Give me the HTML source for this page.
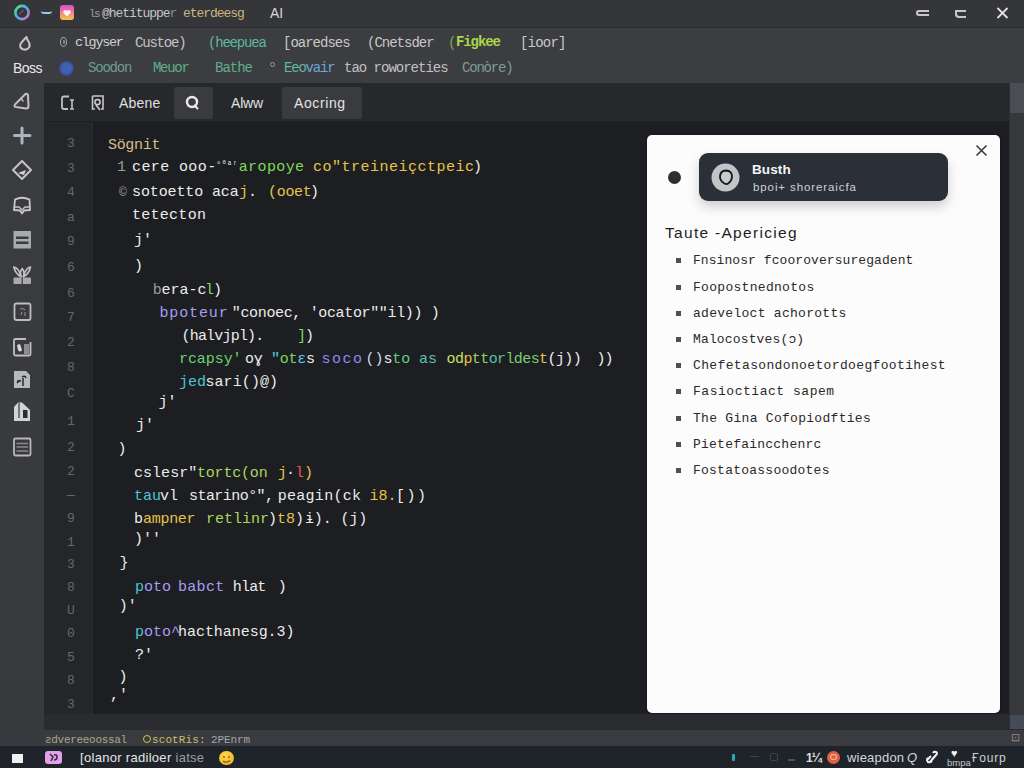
<!DOCTYPE html>
<html><head><meta charset="utf-8">
<style>
*{margin:0;padding:0;box-sizing:border-box}
html,body{width:1024px;height:768px;overflow:hidden;background:#1e1f22;font-family:"Liberation Sans",sans-serif}
.a{position:absolute}
.mono{font-family:"Liberation Mono",monospace}
#title{left:0;top:0;width:1024px;height:27px;background:#35363a}
#menu{left:0;top:26.5px;width:1024px;height:56.5px;background:#3c3d41;border-top:1.5px solid #2a2b2e}
#act{left:0;top:83px;width:44px;height:663px;background:linear-gradient(#3b3c3f,#38393c)}
#tabs{left:44px;top:83px;width:965px;height:39px;background:#27282b;border-bottom:1px solid #1f2023}
#gut{left:44px;top:122px;width:49px;height:592px;background:#252629;border-right:1px solid #2c2d30}
#ed{left:93px;top:122px;width:916px;height:592px;background:#1d1e21}
#strip{left:44px;top:714px;width:965px;height:15px;background:#2a2b2e}
#panel{left:44px;top:729px;width:980px;height:17px;background:#3a3b3f;border-top:1px solid #2a2b2e}
#sb{left:1009px;top:83px;width:15px;height:646px;background:#37383b;border-left:1px solid #2e2f32}
#thumb{left:1010px;top:83px;width:14px;height:30px;background:#4a4e54}
#status{left:0;top:746px;width:1024px;height:22px;background:#1f242b}
.ln{position:absolute;left:46.5px;width:49px;text-align:center;color:#66676a;font-family:"Liberation Mono",monospace;font-size:13px;line-height:16px}
.cl{position:absolute;font-family:"Liberation Mono",monospace;font-size:15px;letter-spacing:0px;line-height:18px;color:#e6e6e6;white-space:pre}
.w{color:#e8e8e8}.g{color:#7ed957}.y{color:#e8c85a}.p{color:#a99cf0}.c{color:#4fc3d6}.lg{color:#b8d860}.r{color:#e85a4a}.o{color:#e8b850}.t{color:#d4b98c}.dim{color:#8a8a8a}
#card{left:647px;top:135px;width:353px;height:578px;background:#fcfcfc;border-radius:5px;box-shadow:0 0 1.5px rgba(0,0,0,0.6)}
#toast{left:699px;top:153px;width:249px;height:48px;background:#2a2f38;border-radius:9px;box-shadow:0 6px 12px rgba(0,0,0,0.18)}
.li{position:absolute;left:693px;font-family:"Liberation Mono",monospace;font-size:13px;line-height:16px;color:#2a2a2a;white-space:pre}
.bul{position:absolute;left:676px;width:5px;height:5px;background:#505050}
.tb{position:absolute;font-size:13px;line-height:16px;white-space:pre;font-family:"Liberation Mono",monospace}
</style></head><body>
<div id="title" class="a"></div>
<div id="menu" class="a"></div>
<!-- title bar content -->
<svg class="a" style="left:12px;top:3px" width="20" height="20" viewBox="0 0 20 20">
<defs><linearGradient id="rg" x1="0" y1="0" x2="1" y2="1"><stop offset="0" stop-color="#5ee07a"/><stop offset="0.45" stop-color="#3fb6e8"/><stop offset="1" stop-color="#e070c8"/></linearGradient></defs>
<circle cx="10" cy="9.5" r="6.6" fill="none" stroke="url(#rg)" stroke-width="2.6"/>
<path d="M7 11 L12 7" stroke="#6a5a7a" stroke-width="1.2"/>
</svg>
<div class="a" style="left:41px;top:11px;width:11px;height:3px;border-bottom:2px solid #9ec8e8;border-radius:0 0 5px 5px"></div>
<div class="a" style="left:60px;top:5px;width:14px;height:15px;border-radius:3px;background:linear-gradient(#d24fd0,#f07a9a 45%,#f5c842)"></div>
<svg class="a" style="left:62px;top:8px" width="10" height="10" viewBox="0 0 10 10"><path d="M5 8.5 L1.5 5 Q0.5 3 2.5 2.2 Q4 1.8 5 3.3 Q6 1.8 7.5 2.2 Q9.5 3 8.5 5 Z" fill="#fff" opacity="0.9"/></svg>
<div class="a mono" style="left:89px;top:6px;font-size:11px;line-height:16px;color:#9a9b9d;white-space:pre;letter-spacing:-1.5px">ls</div>
<div class="a mono" style="left:102px;top:6px;font-size:13px;line-height:16px;color:#c4c5c7;white-space:pre;letter-spacing:-1.05px">@hetituppe<span style="color:#8a8b8d">r</span><span style="color:#c9b67a"> eterdeesg</span></div>
<div class="a" style="left:270px;top:5px;font-size:14px;line-height:16px;color:#d8d8d8">AI</div>
<div class="a" style="left:916px;top:10px;width:13px;height:6px;border:2px solid #c8c8c8;border-right:none;border-radius:3px 0 0 3px"></div>
<div class="a" style="left:955px;top:10px;width:11px;height:8px;border:2px solid #c8c8c8;border-right:none;border-radius:0 0 0 4px"></div>
<svg class="a" style="left:996px;top:7px" width="13" height="12" viewBox="0 0 13 12"><path d="M1.5 1 L11.5 11 M11.5 1 L1.5 11" stroke="#e0e0e0" stroke-width="1.8"/></svg>

<div id="act" class="a"></div>
<!-- menu rows -->
<svg class="a" style="left:16px;top:33px" width="18" height="20" viewBox="0 0 18 20"><path d="M10.5 4 Q6 8.5 4.5 11 Q3.2 14.8 7 16.3 Q11 17.5 13.2 14.2 Q14.5 11.5 12.5 8.5 Q11 6.5 10.5 4 Z" fill="none" stroke="#c4c4c4" stroke-width="2" stroke-linejoin="round"/></svg>
<div class="a" style="left:60px;top:37px;width:7px;height:10px;border:1.6px solid #a8a8a8;border-radius:50%"></div><div class="a" style="left:62.5px;top:40px;width:2px;height:4px;background:#8a8a8a;border-radius:1px"></div>
<div class="tb" style="left:75px;top:35px;color:#d2d2d2;letter-spacing:-1.3px;font-size:13.5px">clgyser</div>
<div class="tb" style="left:135px;top:35px;color:#c4c4c4;letter-spacing:-1.20px;font-size:14px">Custoe)</div>
<div class="tb" style="left:208px;top:35px;color:#5eb89a;letter-spacing:-1.20px;font-size:14px">(heepuea</div>
<div class="tb" style="left:283px;top:35px;color:#c8c8c8;letter-spacing:-1.00px;font-size:14px">[oaredses</div>
<div class="tb" style="left:367px;top:35px;color:#c8c8c8;letter-spacing:-1.00px;font-size:14px">(Cnetsder</div>
<div class="tb" style="left:448px;top:35px;color:#7aa850;letter-spacing:-0.6px;font-size:14px">(</div>
<div class="tb" style="left:456px;top:34px;color:#a8d84a;font-weight:bold;letter-spacing:-1.10px;font-size:14px">Figkee</div>
<div class="tb" style="left:520px;top:35px;color:#c8c8c8;letter-spacing:-0.80px;font-size:14px">[ioor]</div>
<div class="a" style="left:13px;top:60px;font-size:14px;line-height:16px;color:#e8e8e8;letter-spacing:-0.5px">Boss</div>
<div class="a" style="left:59px;top:60.5px;width:15px;height:15px;border-radius:50%;background:radial-gradient(circle,#4060b0 45%,#34488a 70%,#2c3660)"></div>
<div class="tb" style="left:88px;top:60px;color:#6d9c8c;letter-spacing:-1.20px;font-size:14px">Soodon</div>
<div class="tb" style="left:153px;top:60px;color:#5eae8c;letter-spacing:-1.30px;font-size:14px">Meuor</div>
<div class="tb" style="left:215px;top:60px;color:#5eae8c;letter-spacing:-1.00px;font-size:14px">Bathe</div>
<div class="a" style="left:270px;top:62px;width:5px;height:5px;border:1px solid #9a9a9a;border-radius:50%"></div>
<div class="tb" style="left:284px;top:60px;color:#5fb8a0;letter-spacing:-1.20px;font-size:14px">Eeo<span style="color:#6aa8d8">vair</span></div>
<div class="tb" style="left:344px;top:60px;color:#c0c0c0;letter-spacing:-1.00px;font-size:14px">tao roworeties</div>
<div class="tb" style="left:462px;top:60px;color:#7a9e94;letter-spacing:-1.20px;font-size:14px">Conòre)</div>

<div id="tabs" class="a"></div>

<!-- tab bar -->
<svg class="a" style="left:60px;top:94px" width="18" height="18" viewBox="0 0 18 18"><path d="M9 2.5 H4 Q2 2.5 2 4.5 V13 Q2 15 4 15 H8" fill="none" stroke="#c0c0c0" stroke-width="1.8"/><path d="M10 6 L14 6 M12 6 V15 M10 15 H14" fill="none" stroke="#c0c0c0" stroke-width="1.6"/></svg>
<svg class="a" style="left:90px;top:94px" width="16" height="18" viewBox="0 0 16 18"><path d="M2.5 2 H13 V15 H11 M2.5 2 V15 H5" fill="none" stroke="#c8c8c8" stroke-width="1.6"/><circle cx="7.5" cy="8" r="2.6" fill="none" stroke="#d0d0d0" stroke-width="1.5"/><path d="M6 11 L10 16" stroke="#d0d0d0" stroke-width="1.6"/></svg>
<div class="a" style="left:119px;top:95px;font-size:14px;line-height:16px;color:#e0e0e0;letter-spacing:0.2px">Abene</div>
<div class="a" style="left:174px;top:87px;width:39px;height:32px;background:#3a3b3e;border-radius:2px"></div>
<svg class="a" style="left:183px;top:94px" width="20" height="18" viewBox="0 0 20 18"><circle cx="9" cy="8" r="5" fill="none" stroke="#eaeaea" stroke-width="2.4"/><path d="M11 11 L15 15" stroke="#eaeaea" stroke-width="2.2"/></svg>
<div class="a" style="left:231px;top:95px;font-size:14px;line-height:16px;color:#e0e0e0;letter-spacing:-0.2px">Alww</div>
<div class="a" style="left:282px;top:87px;width:80px;height:32px;background:#3a3b3e;border-radius:2px"></div>
<div class="a" style="left:294px;top:95px;font-size:14px;line-height:16px;color:#e4e4e4;letter-spacing:0.6px">Aocring</div>

<!-- activity icons -->
<svg class="a" style="left:0;top:83px" width="44" height="400" viewBox="0 83 44 400">
<g fill="none" stroke="#c2c2c2" stroke-width="2" stroke-linejoin="round" stroke-linecap="round">
<path d="M25.5 94 Q27.5 93 28 95.5 L28.5 106 Q28.5 108.5 26 108.5 L16 107 Q13.5 106.5 15 104.5 Z"/>
<path d="M21 98.5 L23 101" stroke-width="1.4"/>
</g>
<g stroke="#aab6ba" stroke-width="3" stroke-linecap="round"><path d="M22 128 V143 M14.5 135.5 H30"/></g>
<g fill="none" stroke="#c4c4c4" stroke-width="2" stroke-linejoin="round">
<path d="M22 161 L31 170 L22 179 L13 170 Z"/>
</g>
<path d="M18 173 L26 170 L24 175 Z" fill="#d0d0d0"/>
<g fill="none" stroke="#c8c8c8" stroke-width="1.8" stroke-linejoin="round">
<path d="M15 199.5 Q22 196 29.5 199.5 L30 210 L24 210.5 L22 213.5 L20 210.5 L14 210 Z"/>
<path d="M15 207 H19 L22 210 L25 207 H30" stroke-width="1.3"/>
</g>
<rect x="13.5" y="231" width="17.5" height="17.5" fill="#a9aaac"/>
<rect x="16" y="236.5" width="12.5" height="2.5" fill="#3a3b3e"/>
<rect x="16" y="241.5" width="12.5" height="2.5" fill="#3a3b3e"/>
<g fill="none" stroke="#c4c4c4" stroke-width="1.6" stroke-linejoin="round">
<path d="M13.8 267 Q19 268 21 276.5 Q15.5 274 13.8 267 Z"/>
<path d="M30.5 267 Q25.5 268 23.5 276.5 Q29 274 30.5 267 Z"/>
<path d="M22.2 268.5 Q26 273 22.2 279 Q18.5 273 22.2 268.5 Z"/>
</g>
<rect x="13.5" y="277.5" width="17.5" height="6.5" rx="1" fill="#a9aaac"/>
<path d="M22.2 277 V284" stroke="#3a3b3e" stroke-width="1.2"/>
<g fill="none" stroke="#bdbdbd" stroke-width="1.8" stroke-linejoin="round">
<rect x="14.5" y="303.5" width="16" height="16.5" rx="2"/>
</g>
<path d="M20 309 Q23 308 25 310 M21 315 L22 312 M25 316 V312" stroke="#8a8a8a" stroke-width="1.2" fill="none"/>
<g fill="none" stroke="#c0c0c0" stroke-width="1.8" stroke-linejoin="round">
<path d="M26 339 H15.5 Q14 339 14 340.5 V354 Q14 355.5 15.5 355.5 H29 Q30.5 355.5 30.5 354 V342"/>
</g>
<path d="M17 345 L20 344 L22 350 Q20 353 18 350 Z" fill="#d8d8d8"/>
<rect x="24" y="344" width="5" height="10" fill="#8c8d8f"/>
<path d="M14 371 H26 L30 375 V388 H14 Z" fill="#b8b9bb"/>
<path d="M17 381 H21 M17 383 L20 380 M22 377 Q25 375 26 378 M23 378 V386" stroke="#2a2b2e" stroke-width="1.5" fill="none"/>
<path d="M14 407 L18 402.5 H22 L30 410 V421 H14 Z" fill="#d2d3d5"/>
<path d="M19 403 V418" stroke="#3a3b3e" stroke-width="1.2"/>
<rect x="23" y="410" width="4.5" height="8" fill="#2a2b2e"/>
<g fill="none" stroke="#b8b8b8" stroke-width="1.8">
<rect x="14" y="438.5" width="16.5" height="17" rx="1.5"/>
</g>
<path d="M16.5 443.5 H28 M16.5 447 H28 M16.5 451 H28" stroke="#8a8b8d" stroke-width="1.6"/>
</svg>
<div id="gut" class="a"></div>
<div id="ed" class="a"></div>
<div id="strip" class="a"></div>
<div id="panel" class="a"></div>
<div id="sb" class="a"></div>
<div id="thumb" class="a"></div>
<div id="status" class="a"></div>
<!-- panel text -->
<div class="a mono" style="left:45px;top:731.5px;font-size:11px;line-height:16px;color:#a9a78e;white-space:pre;letter-spacing:-0.3px">ƨdvereeoossal</div>
<div class="a" style="left:143px;top:735px;width:8px;height:8px;border:1.8px solid #d2c64a;border-radius:50%"></div>
<div class="a mono" style="left:152px;top:731.5px;font-size:11px;line-height:16px;color:#c9bf6a;white-space:pre;letter-spacing:0.1px">scotRis:</div>
<div class="a mono" style="left:211px;top:731.5px;font-size:11px;line-height:16px;color:#a3a5ab;white-space:pre;letter-spacing:-0.1px">2PEnrm</div>
<!-- status bar -->
<div class="a" style="left:12px;top:754px;width:11px;height:9px;background:#f0f0f0"></div>
<div class="a" style="left:45px;top:751px;width:16.5px;height:13px;border-radius:3px;background:#e2a0e8"></div>
<svg class="a" style="left:45px;top:751px" width="17" height="13" viewBox="0 0 17 13"><path d="M5 3 L8 6 L6 10 M9 4 Q12 3 12 6 Q12 9 9 9" stroke="#3a2a4a" stroke-width="1.6" fill="none"/></svg>
<div class="a" style="left:80px;top:750px;font-size:13px;line-height:16px;color:#e6e6e6;white-space:pre;letter-spacing:0.3px">[olanor radiloer <span style="color:#9a9ca0">iatse</span></div>
<div class="a" style="left:218.5px;top:750.5px;width:15px;height:14.5px;border-radius:50%;background:radial-gradient(circle at 40% 35%,#ffd84a,#f0a820)"></div>
<svg class="a" style="left:218.5px;top:750.5px" width="15" height="15" viewBox="0 0 15 15"><path d="M4 10 Q7.5 12.5 11 9.5" stroke="#8a5a10" stroke-width="1.3" fill="none"/><circle cx="5" cy="6" r="0.9" fill="#8a5a10"/><circle cx="10" cy="6" r="0.9" fill="#8a5a10"/></svg>
<!-- status right -->
<div class="a" style="left:732px;top:754px;width:3px;height:7px;background:#2aa8b8;border-radius:1px"></div>
<div class="a" style="left:750px;top:756px;width:9px;height:4px;border-top:1px solid #3a4048"></div>
<div class="a" style="left:770px;top:753px;width:8px;height:8px;border:1px solid #3e444c;border-radius:2px"></div>
<div class="a" style="left:788px;top:754px;width:7px;height:7px;border-bottom:2px solid #4a5058"></div>
<div class="a" style="left:806px;top:750px;font-size:12px;line-height:16px;color:#e0e0e0;font-weight:bold;letter-spacing:-1px">1¼</div>
<div class="a" style="left:827px;top:751px;width:13px;height:13px;border-radius:50%;background:#e06040"></div>
<div class="a" style="left:830px;top:754px;width:7px;height:6px;border-radius:50%;border:1.5px solid #f0c0a0"></div>
<div class="a" style="left:847px;top:750px;font-size:13px;line-height:16px;color:#d4d4d4;letter-spacing:0.2px;white-space:pre">wieapdon</div>
<div class="a" style="left:907px;top:750px;font-size:13px;line-height:16px;color:#d8d8d8;font-style:italic">Q</div>
<svg class="a" style="left:924px;top:749px" width="17" height="16" viewBox="0 0 17 16"><path d="M3 11 L7 7 M6 13 L12 6 Q14 4 12 3 Q10 2 9 4 M4 9 Q2 11 4 13 Q6 14 8 12" stroke="#f0f0f0" stroke-width="2" fill="none"/></svg>
<div class="a" style="left:951px;top:747px;font-size:11px;line-height:12px;color:#f4f4f4">♥</div>
<div class="a" style="left:947px;top:757px;font-size:9.5px;line-height:11px;color:#c8c8c8;letter-spacing:0px">bmpa</div>
<div class="a" style="left:972px;top:750px;font-size:12px;line-height:16px;color:#d0d0d0;letter-spacing:0.8px;white-space:pre">Ғourp</div>
<div class="a" style="left:1010px;top:715px;width:14px;height:14px;background:#485060;opacity:0.8"></div>
<div class="a" style="left:1011px;top:731px;font-size:11px;line-height:12px;color:#8a8a8a">⊡</div>
<!-- gutter numbers -->
<div class="ln" style="top:136px">3</div>
<div class="ln" style="top:161px">3</div>
<div class="ln" style="top:185px">4</div>
<div class="ln" style="top:210px">a</div>
<div class="ln" style="top:234px">9</div>
<div class="ln" style="top:260px">6</div>
<div class="ln" style="top:286px">6</div>
<div class="ln" style="top:310px">7</div>
<div class="ln" style="top:335px">2</div>
<div class="ln" style="top:360px">8</div>
<div class="ln" style="top:386px">C</div>
<div class="ln" style="top:414px">1</div>
<div class="ln" style="top:440px">2</div>
<div class="ln" style="top:464px">2</div>
<div class="ln" style="top:488px">—</div>
<div class="ln" style="top:511px">9</div>
<div class="ln" style="top:535px">1</div>
<div class="ln" style="top:557px">3</div>
<div class="ln" style="top:580px">8</div>
<div class="ln" style="top:603px">U</div>
<div class="ln" style="top:626px">0</div>
<div class="ln" style="top:650px">5</div>
<div class="ln" style="top:673px">8</div>
<div class="ln" style="top:697px">3</div>
<!-- code -->
<div class="cl" style="left:108px;top:136.5px;color:#d8bd8c;letter-spacing:-0.32px">Sögnit</div>
<div class="cl" style="left:117px;top:159.0px;color:#9a9a9a">1</div>
<div class="cl" style="left:132px;top:159.0px;color:#ececec;letter-spacing:0.39px">cere ooo-</div>
<div class="cl" style="left:216px;top:156.0px;color:#ececec;font-size:9px">°⁰ᵃʳ</div>
<div class="cl" style="left:238.7px;top:159.0px;color:#7ed957;letter-spacing:0.40px">aropoye</div>
<div class="cl" style="left:313px;top:159.0px;color:#e6c34a;letter-spacing:0.50px">co&quot;treineiçctpeic</div>
<div class="cl" style="left:473px;top:159.0px;color:#ececec">)</div>
<div class="cl" style="left:119px;top:183.5px;color:#9a9a9a;font-size:13px">©</div>
<div class="cl" style="left:132px;top:183.5px;color:#ececec;letter-spacing:-0.12px">sotoetto aca</div>
<div class="cl" style="left:239px;top:183.5px;color:#e6c34a">j</div>
<div class="cl" style="left:248px;top:183.5px;color:#ececec">.</div>
<div class="cl" style="left:268px;top:183.5px;color:#e6c34a;letter-spacing:-0.30px">(ooet</div>
<div class="cl" style="left:310px;top:183.5px;color:#ececec">)</div>
<div class="cl" style="left:132px;top:206.5px;color:#ececec;letter-spacing:0.27px">tetecton</div>
<div class="cl" style="left:134px;top:231.5px;color:#ececec">j&#x27;</div>
<div class="cl" style="left:134px;top:257.5px;color:#ececec">)</div>
<div class="cl" style="left:152.7px;top:281.5px;color:#9a9a9a">b</div>
<div class="cl" style="left:161.5px;top:281.5px;color:#ececec">era-c</div>
<div class="cl" style="left:205px;top:281.5px;color:#7ed957">l</div>
<div class="cl" style="left:213px;top:281.5px;color:#ececec">)</div>
<div class="cl" style="left:159.5px;top:304.5px;color:#a99cf0;letter-spacing:0.86px">bpoteur</div>
<div class="cl" style="left:231.8px;top:304.5px;color:#ececec;letter-spacing:-0.35px">&quot;conoec, &#x27;ocator&quot;ʺil)) )</div>
<div class="cl" style="left:181.5px;top:327.5px;color:#ececec;letter-spacing:-0.80px">(halvjpl).</div>
<div class="cl" style="left:297px;top:327.5px;color:#7ed957">]</div>
<div class="cl" style="left:305px;top:327.5px;color:#ececec">)</div>
<div class="cl" style="left:179px;top:350.5px;color:#6cd070;letter-spacing:-0.07px">rcapsy&#x27;</div>
<div class="cl" style="left:245px;top:350.5px;color:#ececec;letter-spacing:-0.31px"><span style="color:#ececec">oɣ </span><span style="color:#5ac8e0">&quot;</span><span style="color:#7ad860">ot</span><span style="color:#5ac8e0">ɛ</span><span style="color:#ececec">s</span></div>
<div class="cl" style="left:321.6px;top:350.5px;color:#8f86f0;letter-spacing:1.47px">soco</div>
<div class="cl" style="left:365.6px;top:350.5px;color:#ececec;letter-spacing:-0.09px"><span style="color:#d0d8f0">()</span><span style="color:#ececec">s</span><span style="color:#5ad080">to</span><span style="color:#5ac0b0"> as</span></div>
<div class="cl" style="left:446.6px;top:350.5px;color:#ececec;letter-spacing:-0.60px"><span style="color:#c8e060">od</span><span style="color:#e8c050">p</span><span style="color:#8ad860">tt</span><span style="color:#5ac0a0">or</span><span style="color:#7ad070">ldes</span><span style="color:#e8c050">t</span><span style="color:#ececec">(j))</span></div>
<div class="cl" style="left:596.5px;top:350.5px;color:#ececec;letter-spacing:-1.00px">))</div>
<div class="cl" style="left:179px;top:373.5px;color:#4fc3d6">jed</div>
<div class="cl" style="left:205.4px;top:373.5px;color:#ececec;letter-spacing:0.10px">sari()@)</div>
<div class="cl" style="left:158.6px;top:393.5px;color:#ececec">j&#x27;</div>
<div class="cl" style="left:136px;top:416.5px;color:#ececec">j&#x27;</div>
<div class="cl" style="left:117.6px;top:440.5px;color:#ececec">)</div>
<div class="cl" style="left:134px;top:464.5px;color:#ececec;letter-spacing:0.03px">cslesr&quot;</div>
<div class="cl" style="left:197px;top:464.5px;color:#a8d860;letter-spacing:-0.19px">tortc(on</div>
<div class="cl" style="left:277.7px;top:464.5px;color:#e6c34a">j</div>
<div class="cl" style="left:286px;top:464.5px;color:#ececec">·</div>
<div class="cl" style="left:295px;top:464.5px;color:#e8574a">l</div>
<div class="cl" style="left:304px;top:464.5px;color:#e6c34a">)</div>
<div class="cl" style="left:134px;top:487.5px;color:#4fc3d6">tau</div>
<div class="cl" style="left:160px;top:487.5px;color:#ececec">vl</div>
<div class="cl" style="left:189px;top:487.5px;color:#ececec;letter-spacing:-0.55px">starino°&quot;,</div>
<div class="cl" style="left:277.7px;top:487.5px;color:#ececec;letter-spacing:0.29px">peagin(ck</div>
<div class="cl" style="left:369.5px;top:487.5px;color:#e6c34a;letter-spacing:0.00px">i8.</div>
<div class="cl" style="left:396px;top:487.5px;color:#ececec;letter-spacing:1.50px">[))</div>
<div class="cl" style="left:134px;top:510.5px;color:#ececec">b</div>
<div class="cl" style="left:143px;top:510.5px;color:#e6c34a;letter-spacing:-0.29px">ampner</div>
<div class="cl" style="left:206px;top:510.5px;color:#a8d860">retlinr</div>
<div class="cl" style="left:268px;top:510.5px;color:#ececec">)</div>
<div class="cl" style="left:277px;top:510.5px;color:#e6c34a">t8</div>
<div class="cl" style="left:295px;top:510.5px;color:#ececec">)</div>
<div class="cl" style="left:305px;top:510.5px;color:#ececec;letter-spacing:-0.13px">ɨ). (j)</div>
<div class="cl" style="left:134px;top:530.5px;color:#ececec">)&#x27;&#x27;</div>
<div class="cl" style="left:119.5px;top:554.5px;color:#ececec">}</div>
<div class="cl" style="left:135px;top:578.5px;color:#4fc3d6">p</div>
<div class="cl" style="left:144px;top:578.5px;color:#a99cf0">oto</div>
<div class="cl" style="left:178px;top:578.5px;color:#a99cf0;letter-spacing:0.30px">babct</div>
<div class="cl" style="left:232.8px;top:578.5px;color:#ececec;letter-spacing:-0.83px">hlat</div>
<div class="cl" style="left:277.7px;top:578.5px;color:#ececec">)</div>
<div class="cl" style="left:118.75px;top:597.5px;color:#ececec">)&#x27;</div>
<div class="cl" style="left:135px;top:623.5px;color:#4fc3d6">p</div>
<div class="cl" style="left:144px;top:623.5px;color:#a99cf0">oto^</div>
<div class="cl" style="left:178px;top:623.5px;color:#ececec;letter-spacing:-0.04px">hacthanesg.3)</div>
<div class="cl" style="left:135px;top:646.5px;color:#ececec">?&#x27;</div>
<div class="cl" style="left:118.5px;top:668.5px;color:#ececec">)</div>
<div class="cl" style="left:110px;top:686.5px;color:#ececec">,&#x27;</div>
<!-- endcode -->
<div id="card" class="a"></div>
<!-- card content -->
<div class="a" style="left:667.5px;top:171px;width:13px;height:13px;border-radius:50%;background:#2e2f31"></div>
<div id="toast" class="a"></div>
<svg class="a" style="left:711px;top:163px" width="30" height="30" viewBox="0 0 30 30">
<circle cx="14.5" cy="14.6" r="14" fill="#c3c4c7"/>
<path d="M15 7.5 Q21.3 7.8 21 14 Q20.7 18 17.5 20.3 Q15.5 21.8 13.5 20.5 Q9 18 9 13.8 Q9.3 7.6 15 7.5 Z" fill="#c8c9cc" stroke="#16171a" stroke-width="1.8"/>
</svg>
<div class="a" style="left:752px;top:162px;font-weight:bold;font-size:13.5px;line-height:16px;color:#f4f4f4;letter-spacing:0.1px">Busth</div>
<div class="a" style="left:753px;top:179px;font-size:11.5px;line-height:16px;color:#d0d3d8;white-space:pre;letter-spacing:0.9px">bpoi+ shoreraicfa</div>
<svg class="a" style="left:975px;top:144px" width="13" height="13" viewBox="0 0 13 13"><path d="M1.5 1.5 L11.5 11.5 M11.5 1.5 L1.5 11.5" stroke="#3a3a3a" stroke-width="1.6"/></svg>
<div class="a" style="left:665px;top:224px;font-size:15.5px;line-height:18px;color:#1e1e1e;white-space:pre;letter-spacing:1.3px">Taute -Apericieg</div>
<div class="bul" style="top:258px"></div><div class="li" style="top:253px;letter-spacing:0.07px">Fnsinosr fcooroversuregadent</div>
<div class="bul" style="top:285px"></div><div class="li" style="top:280px;letter-spacing:0.3px">Foopostnednotos</div>
<div class="bul" style="top:310.5px"></div><div class="li" style="top:305.5px;letter-spacing:0.28px">adevelοct achorotts</div>
<div class="bul" style="top:336.5px"></div><div class="li" style="top:331.5px;letter-spacing:0.15px">Malocostves(ɔ)</div>
<div class="bul" style="top:363px"></div><div class="li" style="top:358px;letter-spacing:0.36px">Chefetasondonoetordoegfootihest</div>
<div class="bul" style="top:389px"></div><div class="li" style="top:384px;letter-spacing:0.53px">Fasioctiact sapem</div>
<div class="bul" style="top:415.5px"></div><div class="li" style="top:410.5px;letter-spacing:0.29px">The Gina Cofopiodfties</div>
<div class="bul" style="top:441.5px"></div><div class="li" style="top:436.5px;letter-spacing:0.23px">Pietefaincchenrc</div>
<div class="bul" style="top:468px"></div><div class="li" style="top:463px;letter-spacing:0.24px">Fostatoassoodotes</div>

</body></html>
